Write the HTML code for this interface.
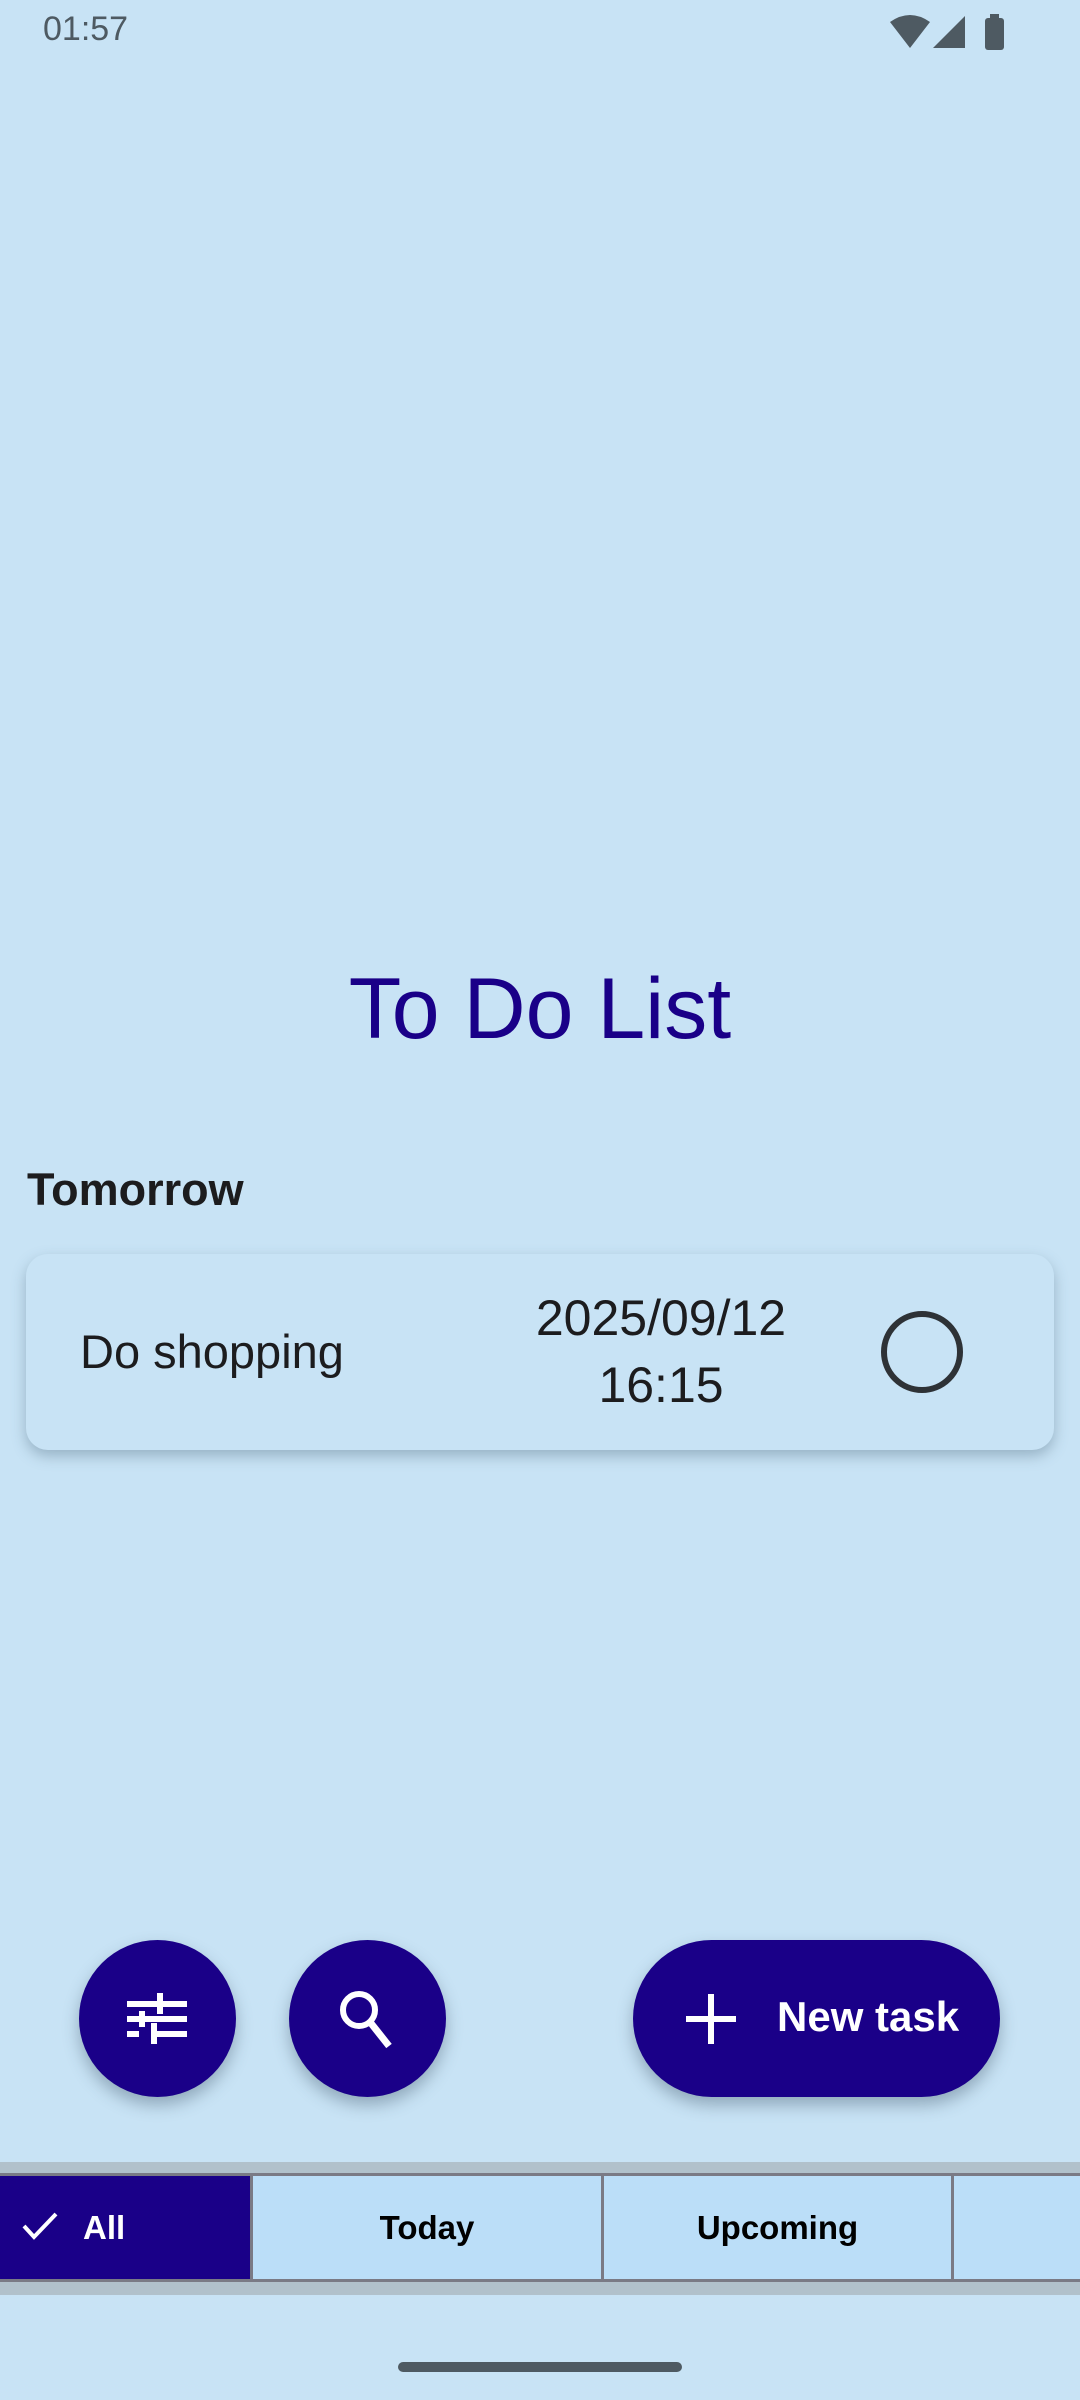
<!DOCTYPE html>
<html><head><meta charset="utf-8">
<style>
*{margin:0;padding:0;box-sizing:border-box}
html,body{width:1080px;height:2400px;overflow:hidden;background:#c8e3f5;font-family:"Liberation Sans",sans-serif;position:relative}
.abs{position:absolute}
.time{left:43px;top:10px;font-size:34px;color:#4e5a62}
.title{left:0;width:1080px;top:960px;text-align:center;font-size:86px;color:#1a0088}
.tom{left:27px;top:1164px;font-size:45px;font-weight:bold;color:#1c1c1e}
.card{left:26px;top:1254px;width:1028px;height:196px;border-radius:22px;background:#c8e3f5;box-shadow:0 6px 14px rgba(60,90,110,.35)}
.task{left:80px;top:1324px;font-size:47px;color:#1c1c1e}
.date{left:480px;width:362px;top:1285px;text-align:center;font-size:50px;line-height:67px;color:#1c1c1e}
.circ{left:881px;top:1311px;width:82px;height:82px;border:6px solid #2e3236;border-radius:50%}
.fab{background:#1a0088;border-radius:79px;box-shadow:0 8px 16px rgba(40,60,80,.35);top:1940px;height:157px}
.nt{left:777px;top:1993px;font-size:42px;font-weight:bold;color:#fff}
.band{left:0;top:2162px;width:1080px;height:133px;background:#b1c1cb}
.tabs{left:0;top:2173px;width:1080px;height:109px;background:#7a7a85}
.tab{top:2176px;height:103px;background:#bbdef8;font-size:33px;font-weight:bold;color:#000;text-align:center;line-height:103px}
.home{left:398px;top:2362px;width:284px;height:10px;border-radius:5px;background:#4e5a62}
</style></head><body>
<div class="abs time">01:57</div>
<svg class="abs" style="left:888px;top:12px" width="120" height="38" viewBox="0 0 120 38">
<path d="M2 10 Q22 -4 42 10 L22 36 Z" fill="#4e5a62"/>
<path d="M45 36 L77 4 L77 36 Z" fill="#4e5a62"/>
<rect x="97" y="6" width="19" height="32" rx="3" fill="#4e5a62"/>
<rect x="102" y="2" width="9" height="6" fill="#4e5a62"/>
</svg>
<div class="abs title">To Do List</div>
<div class="abs tom">Tomorrow</div>
<div class="abs card"></div>
<div class="abs task">Do shopping</div>
<div class="abs date">2025/09/12<br>16:15</div>
<div class="abs circ"></div>

<div class="abs fab" style="left:79px;width:157px"></div>
<svg class="abs" style="left:127px;top:1988px" width="60" height="60" viewBox="0 0 60 60" fill="#fff">
<rect x="0" y="13" width="30" height="6"/><rect x="30" y="5" width="6" height="21"/><rect x="36" y="13" width="24" height="6"/>
<rect x="0" y="28" width="12" height="6"/><rect x="12" y="23" width="6" height="16"/><rect x="18" y="28" width="42" height="6"/>
<rect x="0" y="43" width="12" height="6"/><rect x="24" y="35" width="6" height="21"/><rect x="30" y="43" width="30" height="6"/>
</svg>
<div class="abs fab" style="left:289px;width:157px"></div>
<svg class="abs" style="left:337px;top:1988px" width="60" height="62" viewBox="0 0 60 62">
<circle cx="22" cy="22" r="16" fill="none" stroke="#fff" stroke-width="6"/>
<path d="M33 34 L52 58" stroke="#fff" stroke-width="7"/>
</svg>
<div class="abs fab" style="left:633px;width:367px"></div>
<svg class="abs" style="left:686px;top:1994px" width="50" height="50" viewBox="0 0 50 50">
<rect x="22" y="0" width="6" height="50" fill="#fff"/><rect x="0" y="22" width="50" height="6" fill="#fff"/>
</svg>
<div class="abs nt">New task</div>

<div class="abs band"></div>
<div class="abs tabs"></div>
<div class="abs tab" style="left:0;width:250px;background:#1a0088;color:#fff;text-align:left;padding-left:83px">All</div>
<svg class="abs" style="left:22px;top:2211px" width="36" height="30" viewBox="0 0 36 30">
<path d="M2 15 L12 26 L34 3" fill="none" stroke="#fff" stroke-width="4"/>
</svg>
<div class="abs tab" style="left:253px;width:348px">Today</div>
<div class="abs tab" style="left:604px;width:347px">Upcoming</div>
<div class="abs tab" style="left:954px;width:126px"></div>
<div class="abs home"></div>
</body></html>
